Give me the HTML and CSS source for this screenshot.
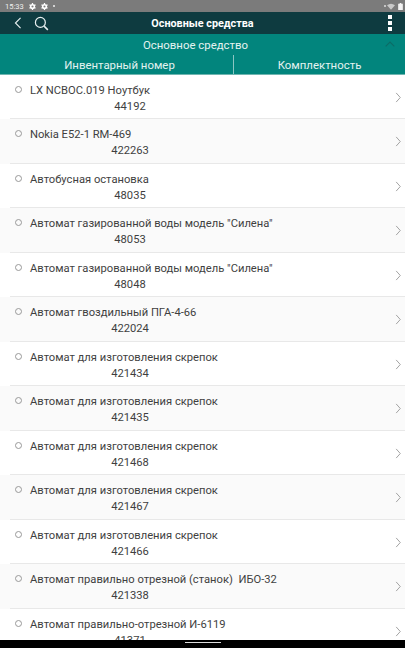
FILE: index.html
```html
<!DOCTYPE html>
<html lang="ru">
<head>
<meta charset="utf-8">
<title>Основные средства</title>
<link rel="stylesheet" href="styles.css">
</head>
<body>
<div class="screen">
  <div class="status">
    <span class="time">15:33</span>
    <svg class="gear" viewBox="0 0 10 10"><circle cx="5" cy="5" r="2.6" fill="none" stroke="#fff" stroke-width="2.200"/><path d="M5 0v3M5 7v3M.7 2.500l2 1.200M7.300 6.300l2 1.200M.7 7.500l2-1.200M7.300 3.700l2-1.200" stroke="#fff" stroke-width="1.800"/></svg>
    <svg class="gear" viewBox="0 0 10 10"><circle cx="5" cy="5" r="2.6" fill="none" stroke="#fff" stroke-width="2.200"/><path d="M5 0v3M5 7v3M.7 2.500l2 1.200M7.300 6.300l2 1.200M.7 7.500l2-1.200M7.300 3.700l2-1.200" stroke="#fff" stroke-width="1.800"/></svg>
    <span class="dot"></span>
    <span class="spacer"></span>
    <span class="dot small"></span>
    <svg class="wifi" viewBox="0 0 10 8"><path d="M0 2.5 5 8l5-5.500Q5-1.500 0 2.500z" fill="#c9c9c9"/></svg>
    <svg class="battery" viewBox="0 0 6 9"><path d="M2 0h2v1h2v8H0V1h2z" fill="#f2f2f2"/></svg>
  </div>
  <header class="topbar">
    <svg class="back" viewBox="0 0 9 14"><path d="M7.500 1 1.500 7l6 6" fill="none" stroke="#e8f0f0" stroke-width="1.300"/></svg>
    <svg class="search" viewBox="0 0 16 16"><circle cx="6.800" cy="6.800" r="5.300" fill="none" stroke="#e8f0f0" stroke-width="1.300"/><path d="m10.800 10.800 4 4" stroke="#e8f0f0" stroke-width="1.600"/></svg>
    <h1 class="title">Основные средства</h1>
    <div class="kebab"><i></i><i></i><i></i></div>
  </header>
  <section class="panel">
    <div class="panel-title">Основное средство
      <svg class="collapse" viewBox="0 0 10 6"><path d="M.7 5.300 5 1l4.300 4.300" fill="none" stroke="#0c6b66" stroke-width="1.100"/></svg>
    </div>
    <div class="tabs">
      <div class="tab tab-inv">Инвентарный номер</div>
      <div class="tab tab-set">Комплектность</div>
    </div>
  </section>
  <main class="list">
    <div class="row"><span class="radio"></span><div class="info"><div class="name">LX NCBOC.019 Ноутбук</div><div class="num">44192</div></div><svg class="chev" viewBox="0 0 6 12"><path d="m1 1 4.500 5L1 11" fill="none" stroke="#9a9a9a" stroke-width="1"/></svg></div>
    <div class="row"><span class="radio"></span><div class="info"><div class="name">Nokia E52-1 RM-469</div><div class="num">422263</div></div><svg class="chev" viewBox="0 0 6 12"><path d="m1 1 4.500 5L1 11" fill="none" stroke="#9a9a9a" stroke-width="1"/></svg></div>
    <div class="row"><span class="radio"></span><div class="info"><div class="name">Автобусная остановка</div><div class="num">48035</div></div><svg class="chev" viewBox="0 0 6 12"><path d="m1 1 4.500 5L1 11" fill="none" stroke="#9a9a9a" stroke-width="1"/></svg></div>
    <div class="row"><span class="radio"></span><div class="info"><div class="name">Автомат газированной воды модель "Силена"</div><div class="num">48053</div></div><svg class="chev" viewBox="0 0 6 12"><path d="m1 1 4.500 5L1 11" fill="none" stroke="#9a9a9a" stroke-width="1"/></svg></div>
    <div class="row"><span class="radio"></span><div class="info"><div class="name">Автомат газированной воды модель "Силена"</div><div class="num">48048</div></div><svg class="chev" viewBox="0 0 6 12"><path d="m1 1 4.500 5L1 11" fill="none" stroke="#9a9a9a" stroke-width="1"/></svg></div>
    <div class="row"><span class="radio"></span><div class="info"><div class="name">Автомат гвоздильный ПГА-4-66</div><div class="num">422024</div></div><svg class="chev" viewBox="0 0 6 12"><path d="m1 1 4.500 5L1 11" fill="none" stroke="#9a9a9a" stroke-width="1"/></svg></div>
    <div class="row"><span class="radio"></span><div class="info"><div class="name">Автомат для изготовления скрепок</div><div class="num">421434</div></div><svg class="chev" viewBox="0 0 6 12"><path d="m1 1 4.500 5L1 11" fill="none" stroke="#9a9a9a" stroke-width="1"/></svg></div>
    <div class="row"><span class="radio"></span><div class="info"><div class="name">Автомат для изготовления скрепок</div><div class="num">421435</div></div><svg class="chev" viewBox="0 0 6 12"><path d="m1 1 4.500 5L1 11" fill="none" stroke="#9a9a9a" stroke-width="1"/></svg></div>
    <div class="row"><span class="radio"></span><div class="info"><div class="name">Автомат для изготовления скрепок</div><div class="num">421468</div></div><svg class="chev" viewBox="0 0 6 12"><path d="m1 1 4.500 5L1 11" fill="none" stroke="#9a9a9a" stroke-width="1"/></svg></div>
    <div class="row"><span class="radio"></span><div class="info"><div class="name">Автомат для изготовления скрепок</div><div class="num">421467</div></div><svg class="chev" viewBox="0 0 6 12"><path d="m1 1 4.500 5L1 11" fill="none" stroke="#9a9a9a" stroke-width="1"/></svg></div>
    <div class="row"><span class="radio"></span><div class="info"><div class="name">Автомат для изготовления скрепок</div><div class="num">421466</div></div><svg class="chev" viewBox="0 0 6 12"><path d="m1 1 4.500 5L1 11" fill="none" stroke="#9a9a9a" stroke-width="1"/></svg></div>
    <div class="row"><span class="radio"></span><div class="info"><div class="name">Автомат правильно отрезной (станок)&nbsp; ИБО-32</div><div class="num">421338</div></div><svg class="chev" viewBox="0 0 6 12"><path d="m1 1 4.500 5L1 11" fill="none" stroke="#9a9a9a" stroke-width="1"/></svg></div>
    <div class="row"><span class="radio"></span><div class="info"><div class="name">Автомат правильно-отрезной И-6119</div><div class="num">41371</div></div><svg class="chev" viewBox="0 0 6 12"><path d="m1 1 4.500 5L1 11" fill="none" stroke="#9a9a9a" stroke-width="1"/></svg></div>
  </main>
  <div class="navbar"><span class="handle"></span></div>
</div>
</body>
</html>
```
FILE: styles.css
```css
* { box-sizing: border-box; }
html, body { margin: 0; padding: 0; }
body { font-family: Roboto, "Liberation Sans", sans-serif; background: #fff; }
.screen { width: 405px; height: 648px; overflow: hidden; position: relative; display: flex; flex-direction: column; }
.status { height: 12px; flex: none; background: #7b7b7b; display: flex; align-items: center; padding: 0 2px 0 5px; color: #f0f0f0; font-size: 7.500px; gap: 5px; }
.time { width: 19px; margin-right: 0; }
.gear { width: 7px; height: 7px; }
.dot { width: 2px; height: 2px; border-radius: 50%; background: #eee; }
.dot.small { margin-right: -4px; background: #ddd; }
.spacer { flex: 1; }
.wifi { width: 8px; height: 7px; }
.battery { width: 5px; height: 7px; margin-left: -2px; }
.topbar { height: 22px; flex: none; background: #0e3b40; display: flex; align-items: center; position: relative; padding-left: 14px; }
.back { width: 8px; height: 12px; }
.search { width: 15px; height: 15px; margin-left: 12px; }
.title { position: absolute; left: 0; right: 0; text-align: center; margin: 0; font-size: 10.800px; font-weight: 700; color: #fff; }
.kebab { position: absolute; right: 13px; top: 3px; display: flex; flex-direction: column; gap: 2px; }
.kebab i { display: block; width: 4px; height: 4px; background: #fff; }
.panel { height: 41px; flex: none; background: #02857d; color: #e4f3f1; border-bottom: 1px solid #6fb5b0; }
.panel-title { height: 21px; display: flex; align-items: center; justify-content: center; font-size: 11.400px; position: relative; padding-right: 14px; }
.collapse { position: absolute; right: 10px; top: 7px; width: 10px; height: 6px; }
.tabs { display: flex; height: 19px; font-size: 11.400px; }
.tab { display: flex; align-items: center; justify-content: center; }
.tab-inv { width: 234px; border-right: 1px solid #8cc6c2; padding-left: 6px; }
.tab-set { flex: 1; padding-left: 0; }
.list { flex: 1; min-height: 0; overflow: hidden; }
.row { height: 44.470px; position: relative; display: flex; color: #3f3f3f; font-size: 11.200px; background: #fff; }
.row:nth-child(even) { background: #fafafa; }
.row::after { content: ""; position: absolute; left: 10px; right: 0; bottom: 0; height: 1px; background: #e8e8e8; }
.radio { position: absolute; left: 15px; top: 11px; width: 7px; height: 7px; border: 1px solid #999; border-radius: 50%; }
.info { margin-left: 30px; width: 200px; padding-top: 8px; line-height: 16px; }
.name { white-space: nowrap; }
.num { text-align: center; }
.chev { position: absolute; right: 4px; top: 17px; width: 6px; height: 11px; }
.navbar { position: absolute; left: 0; right: 0; bottom: 0; height: 8px; background: #000; display: flex; justify-content: center; align-items: center; }
.handle { width: 36px; height: 1px; background: #ddd; margin-top: -3px; }
```
